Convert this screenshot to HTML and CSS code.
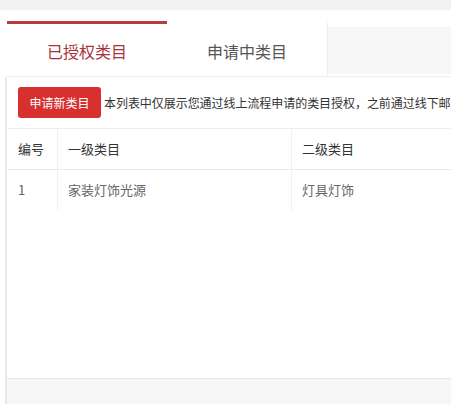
FILE: index.html
```html
<!DOCTYPE html>
<html lang="zh">
<head>
<meta charset="utf-8">
<link rel="stylesheet" href="styles.css">
</head>
<body>
<div class="topbar"></div>
<div class="tabs">
  <div class="tab active">已授权类目</div>
  <div class="tab">申请中类目</div>
  <div class="tab-rest"></div>
</div>
<div class="panel">
  <div class="content">
    <div class="toolbar">
      <button class="btn">申请新类目</button>
      <span class="notice">本列表中仅展示您通过线上流程申请的类目授权，之前通过线下邮件申请的类目授权请联系业务负责人</span>
    </div>
    <table class="grid">
      <thead>
        <tr><th class="c1">编号</th><th class="c2">一级类目</th><th class="c3">二级类目</th></tr>
      </thead>
      <tbody>
        <tr><td>1</td><td>家装灯饰光源</td><td>灯具灯饰</td></tr>
      </tbody>
    </table>
  </div>
  <div class="footer"></div>
</div>
</body>
</html>
```
FILE: styles.css
```css
html, body {
  margin: 0;
  padding: 0;
  background: #fff;
  font-family: "Noto Sans CJK SC", "Liberation Sans", sans-serif;
  overflow: hidden;
  height: 404px;
}
.topbar {
  height: 10px;
  background: #f2f2f2;
  margin-bottom: 11px;
}
.tabs {
  display: flex;
  margin-left: 7px;
  border-bottom: 1px solid #eeeeee;
  box-sizing: border-box;
  height: 56px;
}
.tab {
  width: 160px;
  display: flex;
  align-items: center;
  justify-content: center;
  font-size: 16px;
  color: #555;
  box-sizing: border-box;
  border-top: 3px solid transparent;
  padding-top: 2px;
}
.tab + .tab {
  width: 161px;
  border-right: 1px solid #eeeeee;
}
.tab.active {
  border-top-color: #bd3a3c;
  color: #a8323a;
}
.tab-rest {
  flex: 1;
  background: #f6f6f6;
  margin: 6px 0 2px 0;
}
.panel {
  margin-left: 5px;
  border-left: 2px solid #e8e8e8;
  height: 327px;
  display: flex;
  flex-direction: column;
}
.content {
  flex: 1;
  padding-left: 1px;
  overflow: hidden;
}
.toolbar {
  display: flex;
  align-items: center;
  padding: 10px 0 10px 10px;
  white-space: nowrap;
  overflow: hidden;
}
.btn {
  height: 31px;
  width: 83px;
  border: none;
  border-radius: 3px;
  background: #d7302f;
  color: #fff;
  font-family: inherit;
  font-size: 12px;
  padding: 0;
  margin-right: 3px;
  flex: none;
}
.notice {
  font-size: 12px;
  color: #333;
  letter-spacing: -0.05px;
}
.grid {
  border-collapse: collapse;
  width: 520px;
  font-size: 13px;
}
.grid th, .grid td {
  text-align: left;
  font-weight: normal;
  padding: 0 0 2px 10px;
  height: 38px;
  border-left: 1px solid #f0f0f0;
}
.grid th:first-child, .grid td:first-child {
  border-left: none;
}
.grid thead tr {
  border-top: 1px solid #eeeeee;
  border-bottom: 1px solid #eaeaea;
}
.grid th {
  color: #333;
}
.grid td {
  color: #666;
}
.c1 { width: 39px; }
.c2 { width: 223px; }
.footer {
  height: 25px;
  background: #f6f6f6;
  border-top: 1px solid #e6e6e6;
}
```
